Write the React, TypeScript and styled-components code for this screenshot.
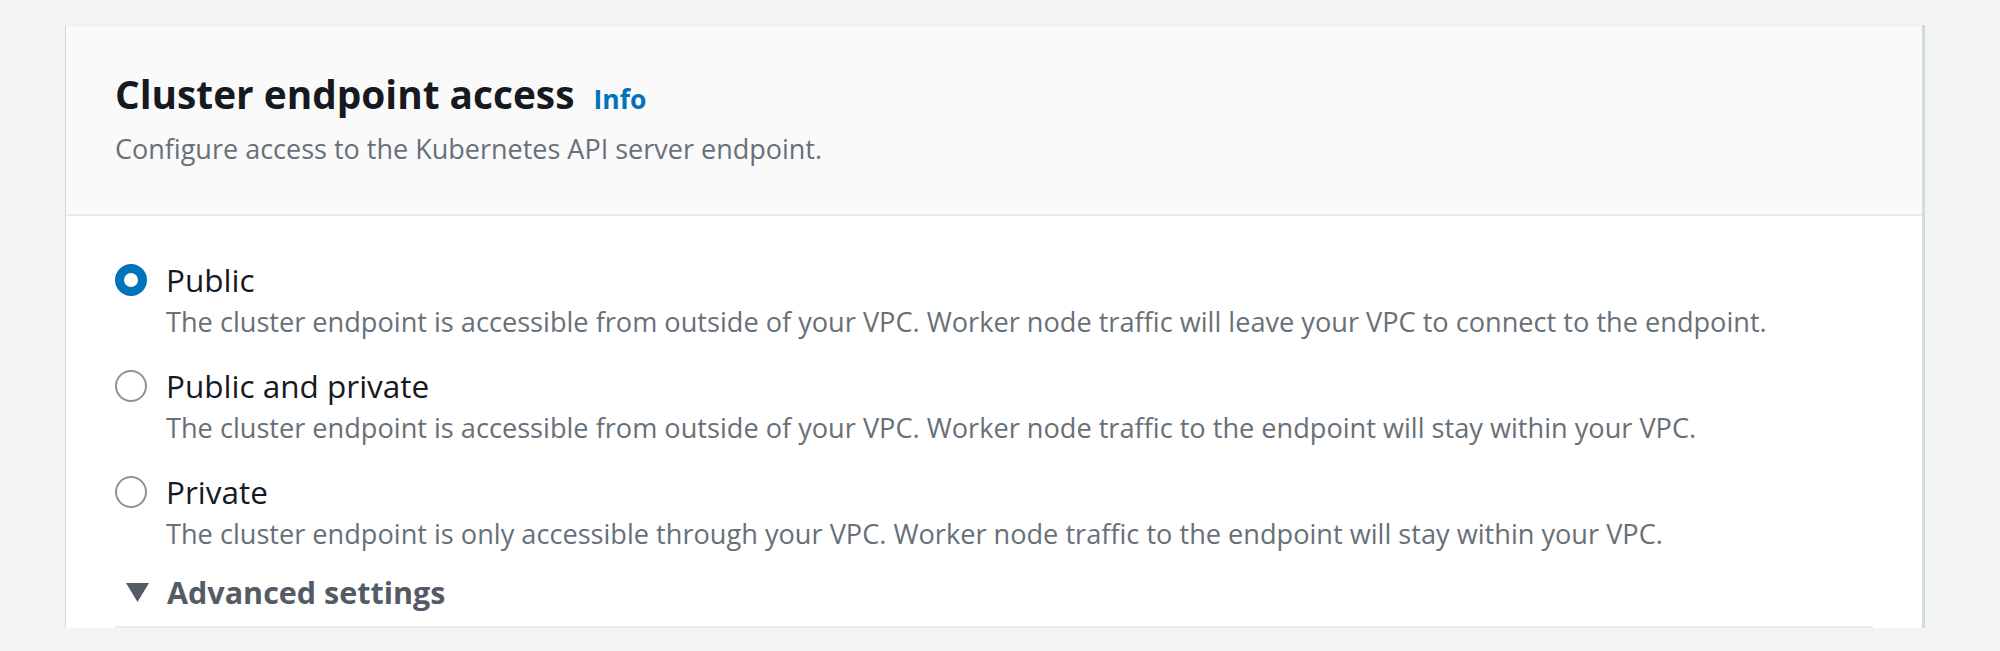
import React, { useState } from "react";
import styled, { createGlobalStyle } from "styled-components";

const GlobalStyle = createGlobalStyle`
  body {
    margin: 0;
    background: #f2f3f3;
    font-family: "Open Sans", "Noto Sans", sans-serif;
    color: #16191f;
  }
`;

const Page = styled.div`
  padding: 25px 78px 0 66px;
  height: 626px;
  overflow: hidden;
`;

const Card = styled.section`
  background: #ffffff;
  border-top: 1px solid #eaeded;
  box-shadow: 3px 0 0 0 #d5dbdb, -1px 0 0 0 #d5dbdb;
`;

const Header = styled.header`
  background: #fafafa;
  border-bottom: 2px solid #eaeded;
  padding: 46px 49px 48px;
  display: flex;
  flex-direction: column;
  gap: 15px;
`;

const TitleRow = styled.div`
  display: flex;
  align-items: baseline;
  gap: 19px;
`;

const Title = styled.h2`
  margin: 0;
  font-size: 38.8px;
  line-height: 44px;
  font-weight: 700;
  color: #16191f;
`;

const InfoLink = styled.a`
  font-size: 26.5px;
  font-weight: 700;
  color: #0073bb;
  text-decoration: none;
  cursor: pointer;
`;

const Description = styled.p`
  margin: 0;
  font-size: 27px;
  line-height: 34px;
  color: #687078;
`;

const Body = styled.div`
  padding: 42px 49px 0;
  display: flex;
  flex-direction: column;
`;

const RadioGroup = styled.div`
  display: flex;
  flex-direction: column;
  gap: 22px;
`;

const Option = styled.label`
  display: grid;
  grid-template-columns: 34px 1fr;
  column-gap: 17px;
  cursor: pointer;
`;

const RadioCircle = styled.span<{ checked: boolean }>`
  width: 32px;
  height: 32px;
  box-sizing: border-box;
  border-radius: 50%;
  align-self: center;
  border: ${(p) => (p.checked ? "9px solid #0073bb" : "2.5px solid #879596")};
  background: #ffffff;
`;

const RadioLabel = styled.span`
  font-size: 31.5px;
  line-height: 44px;
  color: #16191f;
`;

const RadioDesc = styled.span`
  grid-column: 2;
  font-size: 27.15px;
  line-height: 40px;
  color: #687078;
`;

const Expander = styled.button`
  margin-top: 16px;
  padding: 0 0 12px;
  border: none;
  border-bottom: 2px solid #eaeded;
  background: none;
  display: flex;
  align-items: center;
  gap: 18px;
  font-family: inherit;
  font-size: 30.5px;
  line-height: 44px;
  font-weight: 700;
  color: #545b64;
  text-align: left;
  cursor: pointer;
`;

const Caret = styled.svg`
  width: 23px;
  height: 19px;
  margin-left: 11px;
  flex-shrink: 0;
`;

const options = [
  {
    id: "public",
    label: "Public",
    desc: "The cluster endpoint is accessible from outside of your VPC. Worker node traffic will leave your VPC to connect to the endpoint.",
  },
  {
    id: "both",
    label: "Public and private",
    desc: "The cluster endpoint is accessible from outside of your VPC. Worker node traffic to the endpoint will stay within your VPC.",
  },
  {
    id: "private",
    label: "Private",
    desc: "The cluster endpoint is only accessible through your VPC. Worker node traffic to the endpoint will stay within your VPC.",
  },
];

const App = () => {
  const [value, setValue] = useState("public");

  return (
    <>
      <GlobalStyle />
      <Page>
        <Card>
          <Header>
            <TitleRow>
              <Title>Cluster endpoint access</Title>
              <InfoLink>Info</InfoLink>
            </TitleRow>
            <Description>Configure access to the Kubernetes API server endpoint.</Description>
          </Header>
          <Body>
            <RadioGroup>
              {options.map((o) => (
                <Option key={o.id} onClick={() => setValue(o.id)}>
                  <RadioCircle checked={value === o.id} />
                  <RadioLabel>{o.label}</RadioLabel>
                  <RadioDesc>{o.desc}</RadioDesc>
                </Option>
              ))}
            </RadioGroup>
            <Expander>
              <Caret viewBox="0 0 23 19">
                <path d="M0 0 H23 L11.5 19 Z" fill="#545b64" />
              </Caret>
              Advanced settings
            </Expander>
          </Body>
        </Card>
      </Page>
    </>
  );
};

export default App;
